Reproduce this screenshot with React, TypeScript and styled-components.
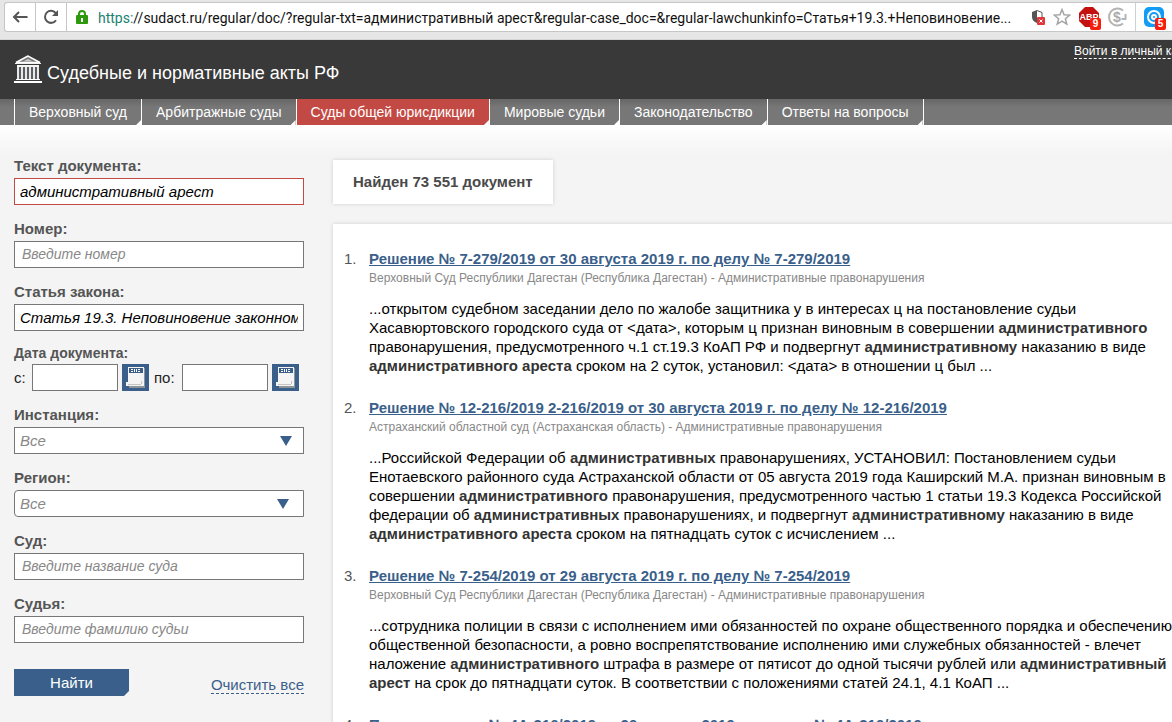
import React from "react";
import styled, { createGlobalStyle, css } from "styled-components";

const sans = '"Liberation Sans", Arial, sans-serif';
const chrome = 'Roboto, "Segoe UI", sans-serif';

const Global = createGlobalStyle`
  * { box-sizing: border-box; }
  body { margin: 0; font-family: ${sans}; background: #f4f4f4; }
`;

const Window = styled.div`
  display: flex;
  flex-direction: column;
  height: 100vh;
  overflow: hidden;
`;

const Toolbar = styled.div`
  flex: none;
  height: 40px;
  padding: 2px 0 8px 4px;
  background: #e6e6e6;
  border-bottom: 1px solid #d6d6d6;
`;

const AddressBox = styled.div`
  display: flex;
  align-items: stretch;
  height: 30px;
  background: #fff;
  border: 1px solid #c6c6c6;
  border-right: 0;
  border-radius: 3px 0 0 3px;
`;

const ToolButton = styled.button`
  width: 31px;
  padding: 0;
  border: 0;
  border-right: 1px solid #c6c6c6;
  background: none;
  display: flex;
  align-items: center;
  justify-content: center;
`;

const Lock = styled.span`
  display: flex;
  align-items: center;
  padding: 0 10px 0 9px;
`;

const Url = styled.div`
  flex: 1;
  min-width: 0;
  overflow: hidden;
  white-space: nowrap;
  font: 14px/30px ${chrome};
  color: #111;
  span { color: #1a8270; }
`;

const Extensions = styled.div`
  display: flex;
  align-items: center;
  gap: 8px;
  padding-right: 8px;
`;

const PageActions = styled(Extensions)``;

const ExtButton = styled.button`
  position: relative;
  display: flex;
  padding: 0;
  border: 0;
  background: none;
`;

const Badge = styled.span`
  position: absolute;
  right: -2px;
  bottom: -3px;
  width: 11px;
  height: 12px;
  border-radius: 2px;
  background: #f51d0c;
  color: #fff;
  font: bold 10px/12px ${sans};
  text-align: center;
`;

const Mailer = styled.div`
  display: flex;
  align-items: center;
  width: 37px;
  padding-left: 8px;
  border-left: 1px solid #d0d0d0;
`;

const Scroll = styled.div`
  flex: 1;
  min-height: 0;
  overflow: auto;
  scrollbar-width: none;
`;

const Site = styled.div`
  min-width: 1224px;
`;

const Header = styled.header`
  display: flex;
  justify-content: space-between;
  align-items: flex-start;
  height: 59px;
  padding: 0 14px;
  background: #393939;
`;

const Brand = styled.a`
  display: flex;
  gap: 5px;
  padding-top: 14px;
  color: #fff;
  font-size: 18px;
  line-height: 38px;
  text-decoration: none;
`;

const Login = styled.a`
  margin-top: 4px;
  color: #fff;
  font-size: 12px;
  line-height: 14px;
  text-decoration: none;
  border-bottom: 1px dashed #fff;
`;

const Nav = styled.nav`
  display: flex;
  height: 26px;
  padding-left: 14px;
  background: linear-gradient(#666 0, #777 8px, #777 100%);
`;

const NavLink = styled.a<{ $active?: boolean }>`
  position: relative;
  padding: 0 14px;
  color: #fff;
  font-size: 14px;
  line-height: 26px;
  white-space: nowrap;
  text-decoration: none;
  border-left: 1px solid #fff;
  ${(p) => p.$active && css`background: #c34a44;`}
  &:last-child { border-right: 1px solid #fff; }
  &::after {
    content: "";
    position: absolute;
    right: 0;
    bottom: 0;
    width: 5px;
    height: 5px;
    background: #fff;
    clip-path: polygon(100% 0, 100% 100%, 0 100%);
  }
`;

const Content = styled.div`
  display: flex;
  align-items: flex-start;
  gap: 29px;
  padding: 29px 39px 0 14px;
  background: linear-gradient(#fff 0, #f4f4f4 30px);
`;

const Form = styled.form`
  flex: none;
  width: 290px;
`;

const Field = styled.div<{ $tight?: boolean }>`
  margin-bottom: 12px;
  > label, > strong {
    display: block;
    font-size: ${(p) => (p.$tight ? 14 : 15)}px;
    font-weight: bold;
    line-height: ${(p) => (p.$tight ? 21 : 24)}px;
    color: #555;
  }
`;

const box = css`
  height: 27px;
  border: 1px solid #777;
  border-radius: 0;
  background: #fff;
  font: italic 15px/19px ${sans};
  outline: none;
`;

const TextInput = styled.input<{ $error?: boolean }>`
  ${box}
  display: block;
  width: 100%;
  padding: 0 5px;
  color: #000;
  ${(p) => p.$error && css`border-color: #c34a44;`}
  &:placeholder-shown { padding: 0 7px 1px; font-size: 14px; }
  &::placeholder { color: #888; opacity: 1; }
`;

const SelectWrap = styled.div<{ $rounded?: boolean }>`
  position: relative;
  select { border-radius: ${(p) => (p.$rounded ? "4px 0 0 4px" : "0")}; }
  svg {
    position: absolute;
    right: ${(p) => (p.$rounded ? 15 : 12)}px;
    top: 9px;
    pointer-events: none;
  }
`;

const Select = styled.select`
  ${box}
  display: block;
  width: 100%;
  padding: 0 5px;
  color: #888;
  appearance: none;
`;

const DateRow = styled.div`
  display: flex;
  align-items: center;
  font-size: 15px;
  color: #222;
`;

const DatePart = styled.span<{ $label: number }>`
  display: flex;
  align-items: center;
  label { width: ${(p) => p.$label}px; line-height: 19px; }
`;

const DateInput = styled.input`
  ${box}
  width: 86px;
  margin-right: 4px;
`;

const DateButton = styled.button`
  display: flex;
  width: 27px;
  height: 27px;
  margin-right: 5px;
  padding: 0;
  border: 0;
  background: #3a5f8a;
`;

const Actions = styled.div`
  display: flex;
  justify-content: space-between;
  align-items: flex-start;
  padding-top: 14px;
`;

const Submit = styled.button`
  width: 115px;
  height: 27px;
  padding: 0;
  border: 0;
  background: #3a5f8a;
  color: #fff;
  font: 15px/27px ${sans};
  clip-path: polygon(0 0, 100% 0, 100% 22px, 110px 100%, 0 100%);
`;

const Clear = styled.a`
  margin-top: 8px;
  color: #3a5f8a;
  font-size: 15px;
  line-height: 16px;
  text-decoration: none;
  border-bottom: 1px dashed #3a5f8a;
`;

const Main = styled.main`
  flex: 1;
  min-width: 0;
  padding-top: 6px;
`;

const Found = styled.div`
  display: inline-block;
  padding: 0 20px;
  background: #fff;
  box-shadow: 0 0 4px rgba(0, 0, 0, 0.15);
  color: #4a4a4a;
  font-size: 15px;
  font-weight: bold;
  line-height: 44px;
`;

const Results = styled.ol`
  margin: 20px 0 0;
  padding: 25px 0 24px;
  list-style: none;
  background: #fff;
  box-shadow: 0 0 4px rgba(0, 0, 0, 0.15);
`;

const Result = styled.li`
  display: flex;
  padding: 0 0 23px 11px;
`;

const Num = styled.span`
  flex: none;
  width: 25px;
  font-size: 15px;
  line-height: 20px;
  color: #555;
`;

const Title = styled.a`
  display: block;
  color: #3a5f8a;
  font-size: 15px;
  font-weight: bold;
  line-height: 20px;
`;

const Meta = styled.div`
  color: #888;
  font-size: 12px;
  line-height: 18px;
`;

const Snippet = styled.p`
  margin: 12px 0 0;
  color: #000;
  font-size: 15px;
  line-height: 19px;
  b { color: #333; }
`;

const Arrow = () => (
  <svg width="12" height="10" viewBox="0 0 12 10" aria-hidden="true">
    <path d="M0 0h12L6 10z" fill="#3a5f8a" />
  </svg>
);

const Calendar = () => (
  <svg width="27" height="27" viewBox="0 0 27 27" shapeRendering="crispEdges" aria-hidden="true">
    <path d="M21 4h2v20H7v-2h14z" fill="#8f9499" />
    <path d="M6 3h16v19H4v-4h2z" fill="#f4f4f4" />
    <path d="M7 4h14v5H7z" fill="#3a5f8a" />
    <path d="M9 5h2v1H9zM9 7h2v1H9zM12 5h1v3h-1zM14 5h1v3h-1zM16 5h2v1h-2zM16 7h2v1h-2z" fill="#fff" />
    <path d="M6 20h13v1H6zM19 17h1v3h-1z" fill="#c4c4c4" />
  </svg>
);

const Temple = () => (
  <svg width="28" height="29" viewBox="0 0 28 29" aria-hidden="true">
    <path d="M14 2L2 8.500h24z" fill="#777" stroke="#fff" strokeWidth="1.500" />
    <path d="M9 7.500h10L14 5z" fill="#ccc" />
    <path d="M1 9h26v1H1zM3 11h22v2H3z" fill="#f4f4f4" />
    <path d="M4 13h20v13H4z" fill="#5a5e63" />
    <path d="M3 13h2v13H3zM7 13h2v13H7zM11 13h2v13h-2zM15 13h2v13h-2zM19 13h2v13h-2zM23 13h2v13h-2z" fill="#e8e8e8" />
    <path d="M2 25h24v1H2zM0 27h28v2H0z" fill="#fff" />
  </svg>
);

const nav = [
  "Верховный суд",
  "Арбитражные суды",
  "Суды общей юрисдикции",
  "Мировые судьи",
  "Законодательство",
  "Ответы на вопросы",
];

const results = [
  {
    title: "Решение № 7-279/2019 от 30 августа 2019 г. по делу № 7-279/2019",
    meta: "Верховный Суд Республики Дагестан (Республика Дагестан) - Административные правонарушения",
    text: (
      <>
        ...открытом судебном заседании дело по жалобе защитника у в интересах ц на постановление судьи
        Хасавюртовского городского суда от &lt;дата&gt;, которым ц признан виновным в совершении{" "}
        <b>административного</b> правонарушения, предусмотренного ч.1 ст.19.3 КоАП РФ и подвергнут{" "}
        <b>административному</b> наказанию в виде <b>административного ареста</b> сроком на 2 суток,
        установил: &lt;дата&gt; в отношении ц был ...
      </>
    ),
  },
  {
    title: "Решение № 12-216/2019 2-216/2019 от 30 августа 2019 г. по делу № 12-216/2019",
    meta: "Астраханский областной суд (Астраханская область) - Административные правонарушения",
    text: (
      <>
        ...Российской Федерации об <b>административных</b> правонарушениях, УСТАНОВИЛ: Постановлением
        судьи Енотаевского районного суда Астраханской области от 05 августа 2019 года Каширский М.А.
        признан виновным в совершении <b>административного</b> правонарушения, предусмотренного частью
        1 статьи 19.3 Кодекса Российской федерации об <b>административных</b> правонарушениях, и
        подвергнут <b>административному</b> наказанию в виде <b>административного ареста</b> сроком на
        пятнадцать суток с исчислением ...
      </>
    ),
  },
  {
    title: "Решение № 7-254/2019 от 29 августа 2019 г. по делу № 7-254/2019",
    meta: "Верховный Суд Республики Дагестан (Республика Дагестан) - Административные правонарушения",
    text: (
      <>
        ...сотрудника полиции в связи с исполнением ими обязанностей по охране общественного порядка и
        обеспечению общественной безопасности, а ровно воспрепятствование исполнению ими служебных
        обязанностей - влечет наложение <b>административного</b> штрафа в размере от пятисот до одной
        тысячи рублей или <b>административный арест</b> на срок до пятнадцати суток. В соответствии с
        положениями статей 24.1, 4.1 КоАП ...
      </>
    ),
  },
  {
    title: "Постановление № 4А-316/2019 от 29 августа 2019 г. по делу № 4А-316/2019",
    meta: "",
    text: null,
  },
];

export default function App() {
  return (
    <Window>
      <Global />
      <Toolbar>
        <AddressBox>
          <ToolButton aria-label="Назад">
            <svg width="16" height="12" viewBox="0 0 16 12" fill="none" stroke="#555" strokeWidth="2">
              <path d="M15.500 6H2M7 1L2 6l5 5" />
            </svg>
          </ToolButton>
          <ToolButton aria-label="Обновить">
            <svg width="16" height="16" viewBox="0 0 16 16" fill="none" stroke="#555" strokeWidth="2">
              <path d="M13 11.200A6 6 0 1 1 12.600 4" />
              <path d="M15 1v6H9z" fill="#555" stroke="none" />
            </svg>
          </ToolButton>
          <Lock>
            <svg width="12" height="14" viewBox="0 0 12 14">
              <path d="M3 6V4a3 3 0 0 1 6 0v2" fill="none" stroke="#2c9a0b" strokeWidth="2" />
              <rect x="0" y="5" width="12" height="9" rx="1" fill="#2c9a0b" />
              <path d="M5 8h2v4H5z" fill="#fff" />
            </svg>
          </Lock>
          <Url>
            <span>https:</span>
            //sudact.ru/regular/doc/?regular-txt=административный арест&amp;regular-case_doc=&amp;regular-lawchunkinfo=Статья+19.3.+Неповиновение...
          </Url>
          <PageActions>
            <ExtButton aria-label="Защита">
              <svg width="14" height="16" viewBox="0 0 14 16">
                <path d="M6 1L1 3v5c0 3 2 5 5 6z" fill="#555" />
                <path d="M6 1.500L11 3.500V8" fill="none" stroke="#555" strokeWidth="1" />
                <rect x="6" y="8" width="8" height="8" rx="1" fill="#e0383a" />
                <path d="M8.500 10.500l3 3M11.500 10.500l-3 3" stroke="#fff" />
              </svg>
            </ExtButton>
            <ExtButton aria-label="В закладки">
              <svg width="18" height="18" viewBox="0 0 18 18" fill="none" stroke="#a5a5a5" strokeWidth="1.500">
                <path d="M9 1.500l2.100 5.200 5.600.4-4.300 3.600 1.400 5.500L9 13.200l-4.800 3 1.400-5.500L1.300 7.100l5.600-.4z" />
              </svg>
            </ExtButton>
          </PageActions>
          <Extensions>
            <ExtButton aria-label="AdBlock">
              <svg width="20" height="20" viewBox="0 0 20 20">
                <path d="M6 0h8l6 6v8l-6 6H6l-6-6V6z" fill="#c4100f" />
                <text x="10" y="13" textAnchor="middle" fontFamily="Liberation Sans" fontSize="9" fontWeight="bold" fill="#fff">ABP</text>
              </svg>
              <Badge>9</Badge>
            </ExtButton>
            <ExtButton aria-label="Кэшбэк">
              <svg width="20" height="20" viewBox="0 0 20 20" fill="none" stroke="#b5b5b5" strokeWidth="2">
                <path d="M16 3.500A8.500 8.500 0 1 0 16 16.500M18.500 7v5h-4" />
                <text x="10" y="15" textAnchor="middle" fontFamily="Liberation Sans" fontSize="14" fontWeight="bold" fill="#aaa" stroke="none">$</text>
              </svg>
            </ExtButton>
          </Extensions>
          <Mailer>
            <ExtButton aria-label="Почта">
              <svg width="20" height="20" viewBox="0 0 20 20" fill="none" stroke="#fff" strokeWidth="2">
                <rect width="20" height="20" rx="5" fill="#129cf5" stroke="none" />
                <circle cx="10" cy="10" r="6" />
                <circle cx="10" cy="10" r="2" />
              </svg>
              <Badge>5</Badge>
            </ExtButton>
          </Mailer>
        </AddressBox>
      </Toolbar>
      <Scroll>
        <Site>
          <Header>
            <Brand href="#">
              <Temple />
              Судебные и нормативные акты РФ
            </Brand>
            <Login href="#">Войти в личный кабинет</Login>
          </Header>
          <Nav>
            {nav.map((n, i) => (
              <NavLink key={n} href="#" $active={i === 2}>{n}</NavLink>
            ))}
          </Nav>
          <Content>
            <Form>
              <Field>
                <label htmlFor="txt">Текст документа:</label>
                <TextInput id="txt" $error defaultValue="административный арест" />
              </Field>
              <Field>
                <label htmlFor="num">Номер:</label>
                <TextInput id="num" placeholder="Введите номер" />
              </Field>
              <Field>
                <label htmlFor="law">Статья закона:</label>
                <TextInput id="law" defaultValue="Статья 19.3. Неповиновение законному распоряжению" />
              </Field>
              <Field $tight>
                <strong>Дата документа:</strong>
                <DateRow>
                  <DatePart $label={18}>
                    <label htmlFor="from">с:</label>
                    <DateInput id="from" />
                    <DateButton type="button" aria-label="Дата с"><Calendar /></DateButton>
                  </DatePart>
                  <DatePart $label={28}>
                    <label htmlFor="to">по:</label>
                    <DateInput id="to" />
                    <DateButton type="button" aria-label="Дата по"><Calendar /></DateButton>
                  </DatePart>
                </DateRow>
              </Field>
              <Field>
                <label htmlFor="inst">Инстанция:</label>
                <SelectWrap>
                  <Select id="inst"><option>Все</option></Select>
                  <Arrow />
                </SelectWrap>
              </Field>
              <Field>
                <label htmlFor="region">Регион:</label>
                <SelectWrap $rounded>
                  <Select id="region"><option>Все</option></Select>
                  <Arrow />
                </SelectWrap>
              </Field>
              <Field>
                <label htmlFor="court">Суд:</label>
                <TextInput id="court" placeholder="Введите название суда" />
              </Field>
              <Field>
                <label htmlFor="judge">Судья:</label>
                <TextInput id="judge" placeholder="Введите фамилию судьи" />
              </Field>
              <Actions>
                <Submit type="button">Найти</Submit>
                <Clear href="#">Очистить все</Clear>
              </Actions>
            </Form>
            <Main>
              <Found>Найден 73 551 документ</Found>
              <Results>
                {results.map((r, i) => (
                  <Result key={r.title}>
                    <Num>{i + 1}.</Num>
                    <div>
                      <Title href="#">{r.title}</Title>
                      <Meta>{r.meta}</Meta>
                      <Snippet>{r.text}</Snippet>
                    </div>
                  </Result>
                ))}
              </Results>
            </Main>
          </Content>
        </Site>
      </Scroll>
    </Window>
  );
}
